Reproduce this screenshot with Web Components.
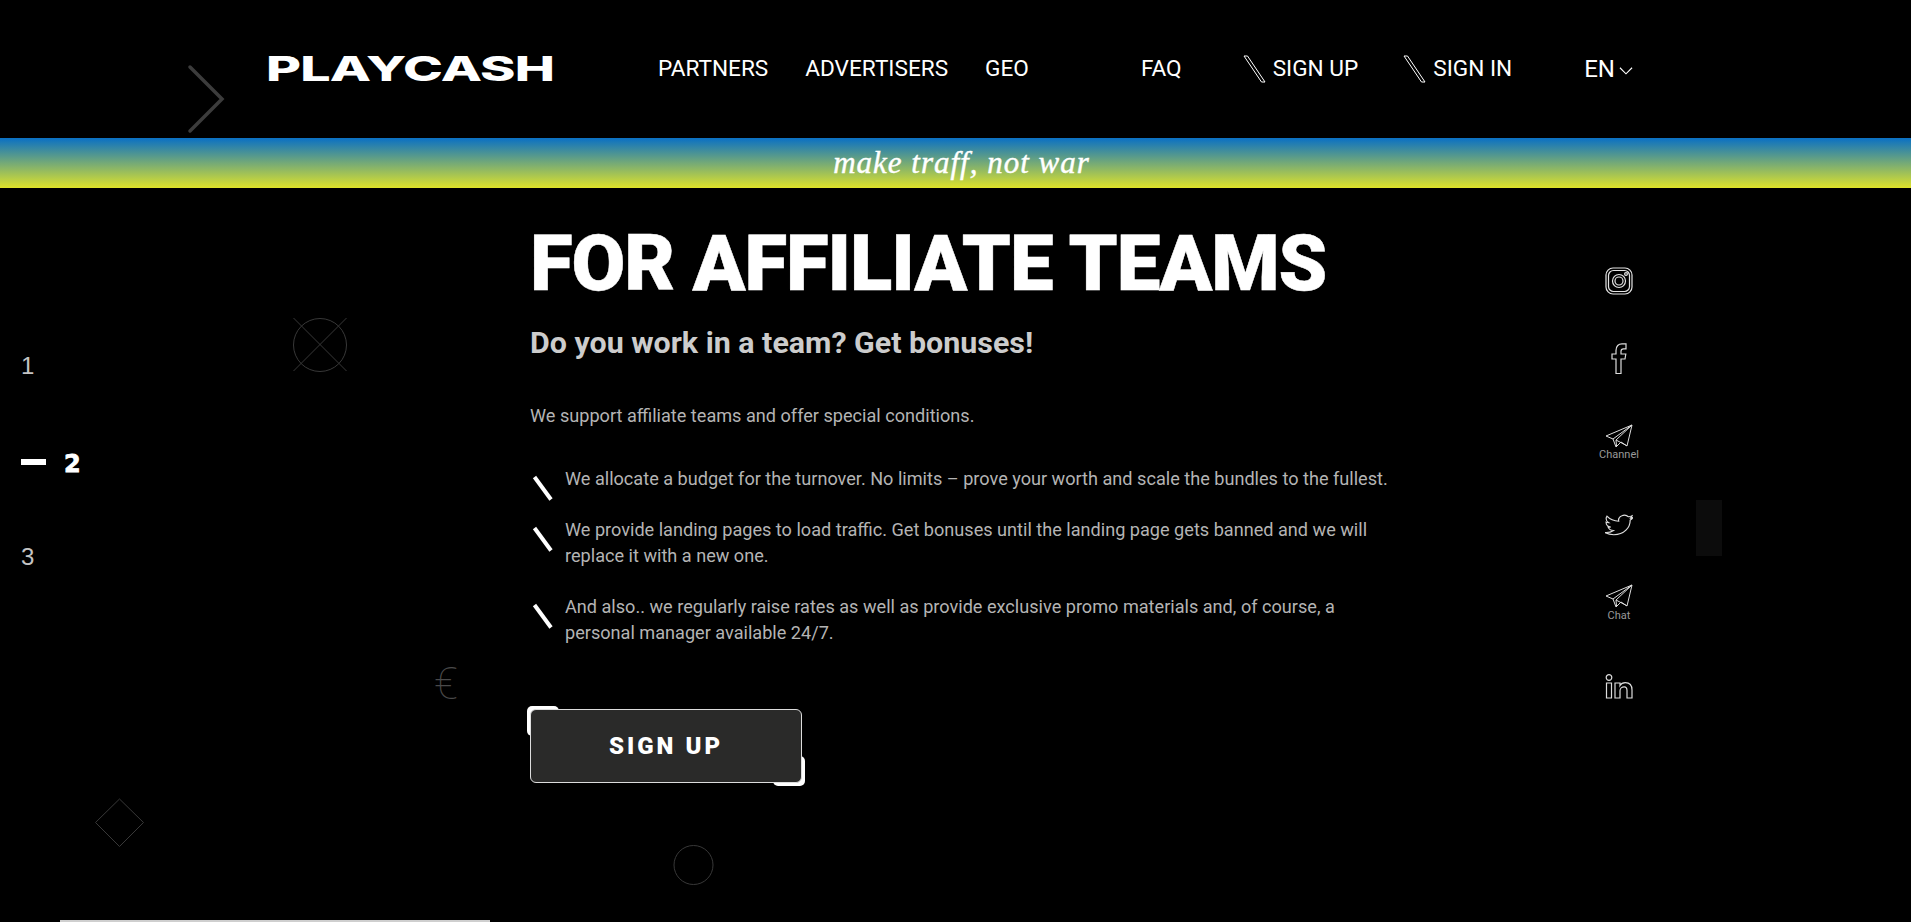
<!DOCTYPE html>
<html lang="en">
<head>
<meta charset="utf-8">
<title>PlayCash</title>
<style>
  html, body { margin: 0; background: #000; height: 100%; overflow: hidden; }
  body { font-family: Roboto, "Liberation Sans", sans-serif; color: #fff; position: relative; height: 922px; }
</style>
</head>
<body>
<pc-header></pc-header>
<pc-stripe>make traff, not war</pc-stripe>
<pc-main>
  <pc-pager slot="left"></pc-pager>
  <pc-hero>
    <span slot="title">FOR AFFILIATE TEAMS</span>
    <span slot="sub">Do you work in a team? Get bonuses!</span>
    <span slot="lead">We support affiliate teams and offer special conditions.</span>
    <pc-point>We allocate a budget for the turnover. No limits – prove your worth and scale the bundles to the fullest.</pc-point>
    <pc-point>We provide landing pages to load traffic. Get bonuses until the landing page gets banned and we will replace it with a new one.</pc-point>
    <pc-point>And also.. we regularly raise rates as well as provide exclusive promo materials and, of course, a personal manager available 24/7.</pc-point>
    <pc-button slot="action">SIGN UP</pc-button>
  </pc-hero>
  <pc-socials slot="right"></pc-socials>
</pc-main>
<pc-decor></pc-decor>

<script>
  (function () {
    const define = (name, css, html) => {
      customElements.define(
        name,
        class extends HTMLElement {
          connectedCallback() {
            if (this.shadowRoot) return;
            this.attachShadow({ mode: "open" });
            this.shadowRoot.innerHTML = "<style>" + css + "</style>" + html;
          }
        }
      );
    };

    const slash =
      '<svg width="23" height="28" viewBox="0 0 23 28"><path d="M1 1h3.500L22 27h-3.500z" fill="none" stroke="#fff" stroke-width="1"/></svg>';

    define(
      "pc-header",
      `:host { display: flex; align-items: flex-start; height: 138px; padding: 55px 0 0 268px; box-sizing: border-box; font-size: 22.6px; color: #fff; }
       .logo { width: 285px; height: 27px; margin-right: 105px; }
       .logo span { display: block; font: 800 34px/27px Inter, sans-serif; transform-origin: 0 0; transform: scaleX(1.58); white-space: nowrap; letter-spacing: -.5px; margin-left: -2px; }
       nav { display: flex; gap: 37px; line-height: 27px; }
       .gap { width: 38px; }
       .auth { display: flex; gap: 7px; margin-left: 24px; }
       .auth + .auth { margin-left: 8px; }
       .lang { display: flex; gap: 4px; margin-left: 35px; position: relative; top: 1px; font-size: 24px; }
       .lang svg { margin-top: 10px; }`,
      `<div class="logo"><span>PLAYCASH</span></div>
       <nav>
         <span>PARTNERS</span><span>ADVERTISERS</span><span>GEO</span><span class="gap"></span><span>FAQ</span>
         <span class="auth">${slash}<span>SIGN UP</span></span>
         <span class="auth">${slash}<span>SIGN IN</span></span>
         <span class="lang"><span>EN</span><svg width="14" height="10" viewBox="0 0 15 10"><path d="M1 1.500l6.500 6.500 6.500-6.500" fill="none" stroke="#fff" stroke-width="1.200"/></svg></span>
       </nav>`
    );

    define(
      "pc-stripe",
      `:host { display: flex; justify-content: center; height: 50px; background: linear-gradient(#0a70c4, #dfe32a); color: #fff; font: italic 31px/50px "Liberation Serif", serif; letter-spacing: 1px; -webkit-text-stroke: .4px #fff; }
       span { position: relative; left: 6px; }`,
      `<span><slot></slot></span>`
    );

    define(
      "pc-main",
      `:host { display: grid; grid-template-columns: 530px 1070px 1fr; height: 734px; }`,
      `<slot name="left"></slot><slot></slot><slot name="right"></slot>`
    );

    define(
      "pc-pager",
      `:host { display: block; padding: 164px 0 0 21px; font: 24px/28px "Liberation Sans", sans-serif; color: #c4c4c4; }
       div { height: 28px; }
       .on { display: flex; align-items: center; gap: 18px; margin: 70px 0 65px; color: #fff; font: 900 24px/28px "DejaVu Sans", sans-serif; }
       .on span { -webkit-text-stroke: .8px #fff; }
       .on i { width: 25px; height: 6px; background: #fff; position: relative; top: -2px; }`,
      `<div>1</div><div class="on"><i></i><span>2</span></div><div>3</div>`
    );

    define(
      "pc-hero",
      `:host { display: block; }
       h1 { margin: 30px 0 0; font: 900 78px/92px Roboto, sans-serif; color: #fff; white-space: nowrap; letter-spacing: -1.1px; -webkit-text-stroke: .5px #fff; }
       h2 { margin: 14px 0 0; font: bold 30.4px/38px Roboto, sans-serif; color: #ccc; }
       p { margin: 41px 0 0; font: 18.13px/26px Roboto, sans-serif; color: #b4b4b4; }
       .list { margin-top: 37px; width: 860px; }
       .action { margin-top: 64px; }`,
      `<h1><slot name="title"></slot></h1>
       <h2><slot name="sub"></slot></h2>
       <p><slot name="lead"></slot></p>
       <div class="list"><slot></slot></div>
       <div class="action"><slot name="action"></slot></div>`
    );

    define(
      "pc-point",
      `:host { display: flex; gap: 12px; font: 18.13px/25.6px Roboto, sans-serif; color: #b4b4b4; margin-bottom: 25.4px; }
       svg { flex: none; position: relative; top: 9px; }
       div { flex: 1; }`,
      `<svg width="23" height="26" viewBox="0 0 23 26"><path d="M4.500 2L21 24.500" stroke="#fff" stroke-width="4" fill="none"/></svg><div><slot></slot></div>`
    );

    define(
      "pc-button",
      `:host { display: inline-block; position: relative; width: 272px; height: 74px; }
       .c { position: absolute; width: 32px; height: 30px; background: #fff; border-radius: 5px; }
       .c.a { left: -3px; top: -3px; } .c.b { right: -3px; bottom: -3px; }
       button { position: absolute; inset: 0; width: 100%; height: 100%; box-sizing: border-box; background: #2a2a29; border: 1px solid #ddd; border-radius: 6px; color: #fff; font: 900 24px Roboto, sans-serif; letter-spacing: 3px; padding: 0; }`,
      `<i class="c a"></i><i class="c b"></i><button><slot></slot></button>`
    );

    const plane =
      '<svg width="28" height="24" viewBox="0 0 28 24"><path d="M27 1L1 12l7 3 3 8 5-5 6 4zM27 1L8 15M27 1L11 16l.5 6M11 16l11 5.800" fill="none" stroke="#ddd" stroke-width="1"/></svg>';

    define(
      "pc-socials",
      `:host { display: flex; flex-direction: column; align-items: center; width: 38px; color: #999; font: 11px/13px Roboto, sans-serif; padding-top: 79px; }
       div { display: flex; flex-direction: column; align-items: center; }
       svg { display: block; }`,
      `<div style="height:76px"><svg width="28" height="28" viewBox="0 0 28 28" fill="none" stroke="#e4e4e4" stroke-width="1.200"><rect x="1" y="1" width="26" height="26" rx="7"/><rect x="3.500" y="3.500" width="21" height="21" rx="5"/><circle cx="14" cy="14" r="6.500"/><circle cx="14" cy="14" r="4"/><circle cx="21" cy="7" r="1.400"/></svg></div>
       <div style="height:81px"><svg width="16" height="31" viewBox="0 0 16 31" fill="none" stroke="#ddd" stroke-width="1.200"><path d="M5 30.500V16H1v-5h4V7.500C5 3 7.500.8 11 .8h4v5h-2.500c-1.800 0-2.500 .8-2.500 2.500V11h4.800l-.8 5h-4v14.500z"/></svg></div>
       <div style="height:89px">${plane}<span>Channel</span></div>
       <div style="height:71px"><svg width="28" height="24" viewBox="0 0 24 24" fill="none" stroke="#ddd" stroke-width="1" preserveAspectRatio="none"><path d="M23.953 4.570a10 10 0 01-2.825.775 4.958 4.958 0 002.163-2.723c-.951.555-2.005.959-3.127 1.184a4.920 4.920 0 00-8.384 4.482C7.690 8.095 4.067 6.130 1.640 3.162a4.822 4.822 0 00-.666 2.475c0 1.710.87 3.213 2.188 4.096a4.904 4.904 0 01-2.228-.616v.06a4.923 4.923 0 003.946 4.827 4.996 4.996 0 01-2.212.085 4.936 4.936 0 004.604 3.417 9.867 9.867 0 01-6.102 2.105c-.39 0-.779-.023-1.170-.067a13.995 13.995 0 007.557 2.209c9.053 0 13.998-7.496 13.998-13.985 0-.21 0-.42-.015-.63A9.935 9.935 0 0024 4.590z"/></svg></div>
       <div style="height:90px">${plane}<span style="margin-top:1px">Chat</span></div>
       <div><svg width="28" height="25" viewBox="0 0 28 25" fill="none" stroke="#ddd" stroke-width="1.200"><circle cx="4" cy="3.500" r="2.800"/><path d="M1.500 9h5v15h-5zM10 9h5v2.500c1-1.800 3-2.900 5.300-2.900 4.700 0 6.700 3 6.700 7.400V24h-5v-7.500c0-2.200-.8-3.600-2.800-3.600-2.200 0-4.200 1.500-4.200 3.800V24h-5z"/></svg></div>`
    );

    // faint background shapes, each sits at its own spot on the canvas
    define(
      "pc-decor",
      `:host { position: absolute; inset: 0; pointer-events: none; display: block; }
       svg { position: absolute; left: 0; top: 0; }
       .euro { position: absolute; left: 434px; top: 662px; font: 100 44px/44px Roboto, sans-serif; color: #4a4a4a; }
       .line { position: absolute; left: 60px; top: 920px; width: 430px; height: 2px; background: #cfcfcf; }
       .block { position: absolute; left: 1696px; top: 500px; width: 26px; height: 56px; background: #0c0c0c; }`,
      `<svg width="1911" height="922" fill="none" stroke="#383838">
         <path d="M190 67l32 32-32 32" stroke="#3c3c3c" stroke-width="3.500" stroke-linecap="round"/>
         <circle cx="320" cy="345" r="26.500"/>
         <path d="M293.500 371l53-53M293.500 318l53 53"/>
         <path d="M119.500 799L143.500 822.500 119.500 846.500 95.500 822.500z"/>
         <circle cx="693.500" cy="865" r="19.500"/>
       </svg>
       <span class="euro">€</span>
       <i class="block"></i>
       <i class="line"></i>`
    );
  })();
</script>
</body>
</html>
